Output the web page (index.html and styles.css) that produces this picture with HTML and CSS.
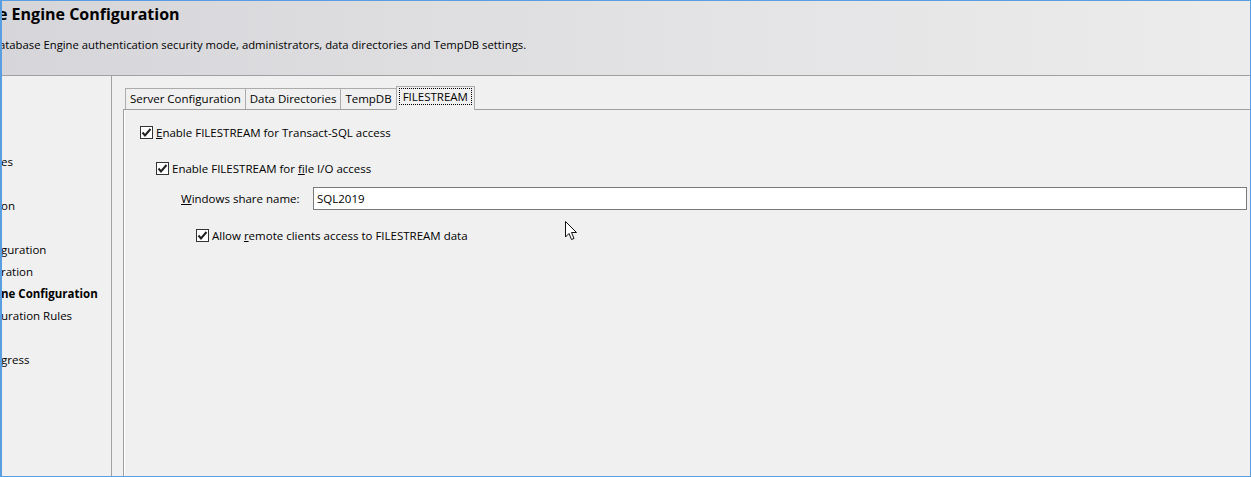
FILE: index.html
```html
<!DOCTYPE html>
<html lang="en">
<head>
    <meta charset="UTF-8">
    <title>Database Engine Configuration</title>
    <link rel="stylesheet" href="styles.css">
</head>
<body>
    <div class="window">
        <header class="page-header">
            <h1 class="page-title">e Engine Configuration</h1>
            <p class="page-desc">atabase Engine authentication security mode, administrators, data directories and TempDB settings.</p>
        </header>

        <div class="page-body">
            <nav class="steps">
                <div class="step"></div>
                <div class="step"></div>
                <div class="step"></div>
                <div class="step">es</div>
                <div class="step"></div>
                <div class="step">on</div>
                <div class="step"></div>
                <div class="step">guration</div>
                <div class="step">ration</div>
                <div class="step active">ne Configuration</div>
                <div class="step">uration Rules</div>
                <div class="step"></div>
                <div class="step">gress</div>
            </nav>

            <main class="content">
                <div class="tabs">
                    <div class="tab">Server Configuration</div>
                    <div class="tab">Data Directories</div>
                    <div class="tab">TempDB</div>
                    <div class="tab selected"><span class="focus">FILESTREAM</span></div>
                </div>

                <div class="tab-panel">
                    <label class="check row-sql">
                        <span class="box"><svg width="11" height="11" viewBox="0 0 11 11"><path d="M1.5 5.5 L4 8.5 L9.5 2" fill="none" stroke="#222" stroke-width="2"/></svg></span>
                        <span><u>E</u>nable FILESTREAM for Transact-SQL access</span>
                    </label>

                    <label class="check row-io">
                        <span class="box"><svg width="11" height="11" viewBox="0 0 11 11"><path d="M1.5 5.5 L4 8.5 L9.5 2" fill="none" stroke="#222" stroke-width="2"/></svg></span>
                        <span>Enable FILESTREAM for <u>f</u>ile I/O access</span>
                    </label>

                    <div class="share-row">
                        <span class="share-label"><u>W</u>indows share name:</span>
                        <div class="share-input">SQL2019</div>
                    </div>

                    <label class="check row-remote">
                        <span class="box"><svg width="11" height="11" viewBox="0 0 11 11"><path d="M1.5 5.5 L4 8.5 L9.5 2" fill="none" stroke="#222" stroke-width="2"/></svg></span>
                        <span>Allow <u>r</u>emote clients access to FILESTREAM data</span>
                    </label>
                </div>
            </main>
        </div>

        <!-- mouse pointer over the panel -->
        <svg class="cursor" width="13" height="20" viewBox="0 0 13 20">
            <path d="M0.5 0.5 L0.5 16 L4 12.5 L6.5 18.5 L9 17.5 L6.5 11.5 L11.5 11.5 Z" fill="#fff" stroke="#111" stroke-width="1"/>
        </svg>
    </div>
</body>
</html>
```

FILE: styles.css
```css
body, html {
    margin: 0;
    padding: 0;
    background: #f0f0f0;
    font-family: "Open Sans", "Noto Sans", sans-serif;
    font-size: 11.5px;
    color: #000;
}

.window {
    position: relative;
    width: 1251px;
    height: 477px;
    box-sizing: border-box;
    border: 1px solid #5a9ee2;
    border-left-width: 2px;
    background: #f0f0f0;
    overflow: hidden;
    display: flex;
    flex-direction: column;
}

.page-header {
    height: 74px;
    flex-shrink: 0;
    border-bottom: 1px solid #a0a0a0;
    background: linear-gradient(to right, #d6d6da, #e4e4e6 60%, #ececec);
    overflow: hidden;
}

.page-title {
    margin: 2px 0 0 -4px;
    font-size: 16px;
    font-weight: bold;
    white-space: nowrap;
}

.page-desc {
    margin: 12px 0 0 -3px;
    font-size: 11.3px;
    white-space: nowrap;
}

.page-body {
    flex: 1;
    display: flex;
    min-height: 0;
}

.steps {
    width: 109px;
    flex-shrink: 0;
    border-right: 1px solid #a0a0a0;
    padding-top: 9px;
    overflow: hidden;
}

.step {
    height: 22px;
    line-height: 22px;
    white-space: nowrap;
    margin-left: -1px;
}

.step.active {
    font-weight: bold;
}

.content {
    flex: 1;
    display: flex;
    flex-direction: column;
    padding: 10px 0 0 11px;
    min-width: 0;
}

.tabs {
    display: flex;
    align-items: flex-end;
    padding-left: 2px;
    height: 23px;
    position: relative;
    z-index: 1;
}

.tab {
    height: 20px;
    line-height: 19px;
    padding: 0 4px;
    border: 1px solid #acacac;
    border-bottom: none;
    margin-right: -1px;
    background: #f0f0f0;
    white-space: nowrap;
}

.tab.selected {
    height: 23px;
    line-height: 20px;
    padding: 0 2px;
    margin-bottom: -1px;
    background: #f0f0f0;
}

.focus {
    border: 1px dotted #000;
    padding: 0 3px;
}

.tab-panel {
    flex: 1;
    border-top: 1px solid #a0a0a0;
    border-left: 1px solid #a0a0a0;
    box-shadow: inset 1px 0 0 #fff;
    display: flex;
    flex-direction: column;
    align-items: flex-start;
}

.check {
    display: flex;
    align-items: center;
    gap: 3px;
    white-space: nowrap;
}

.box {
    width: 11px;
    height: 11px;
    border: 1px solid #333;
    background: #fff;
    display: flex;
}

.row-sql {
    margin: 15px 0 0 16px;
}

.row-io {
    margin: 21px 0 0 32px;
}

.share-row {
    align-self: stretch;
    display: flex;
    align-items: center;
    margin: 11px 3px 0 57px;
}

.share-label {
    width: 132px;
    white-space: nowrap;
}

.share-input {
    flex: 1;
    height: 21px;
    line-height: 21px;
    border: 1px solid #7a7a7a;
    background: #fff;
    padding-left: 3px;
}

.row-remote {
    margin: 18px 0 0 72px;
}

.cursor {
    position: absolute;
    left: 563px;
    top: 220px;
}
```
